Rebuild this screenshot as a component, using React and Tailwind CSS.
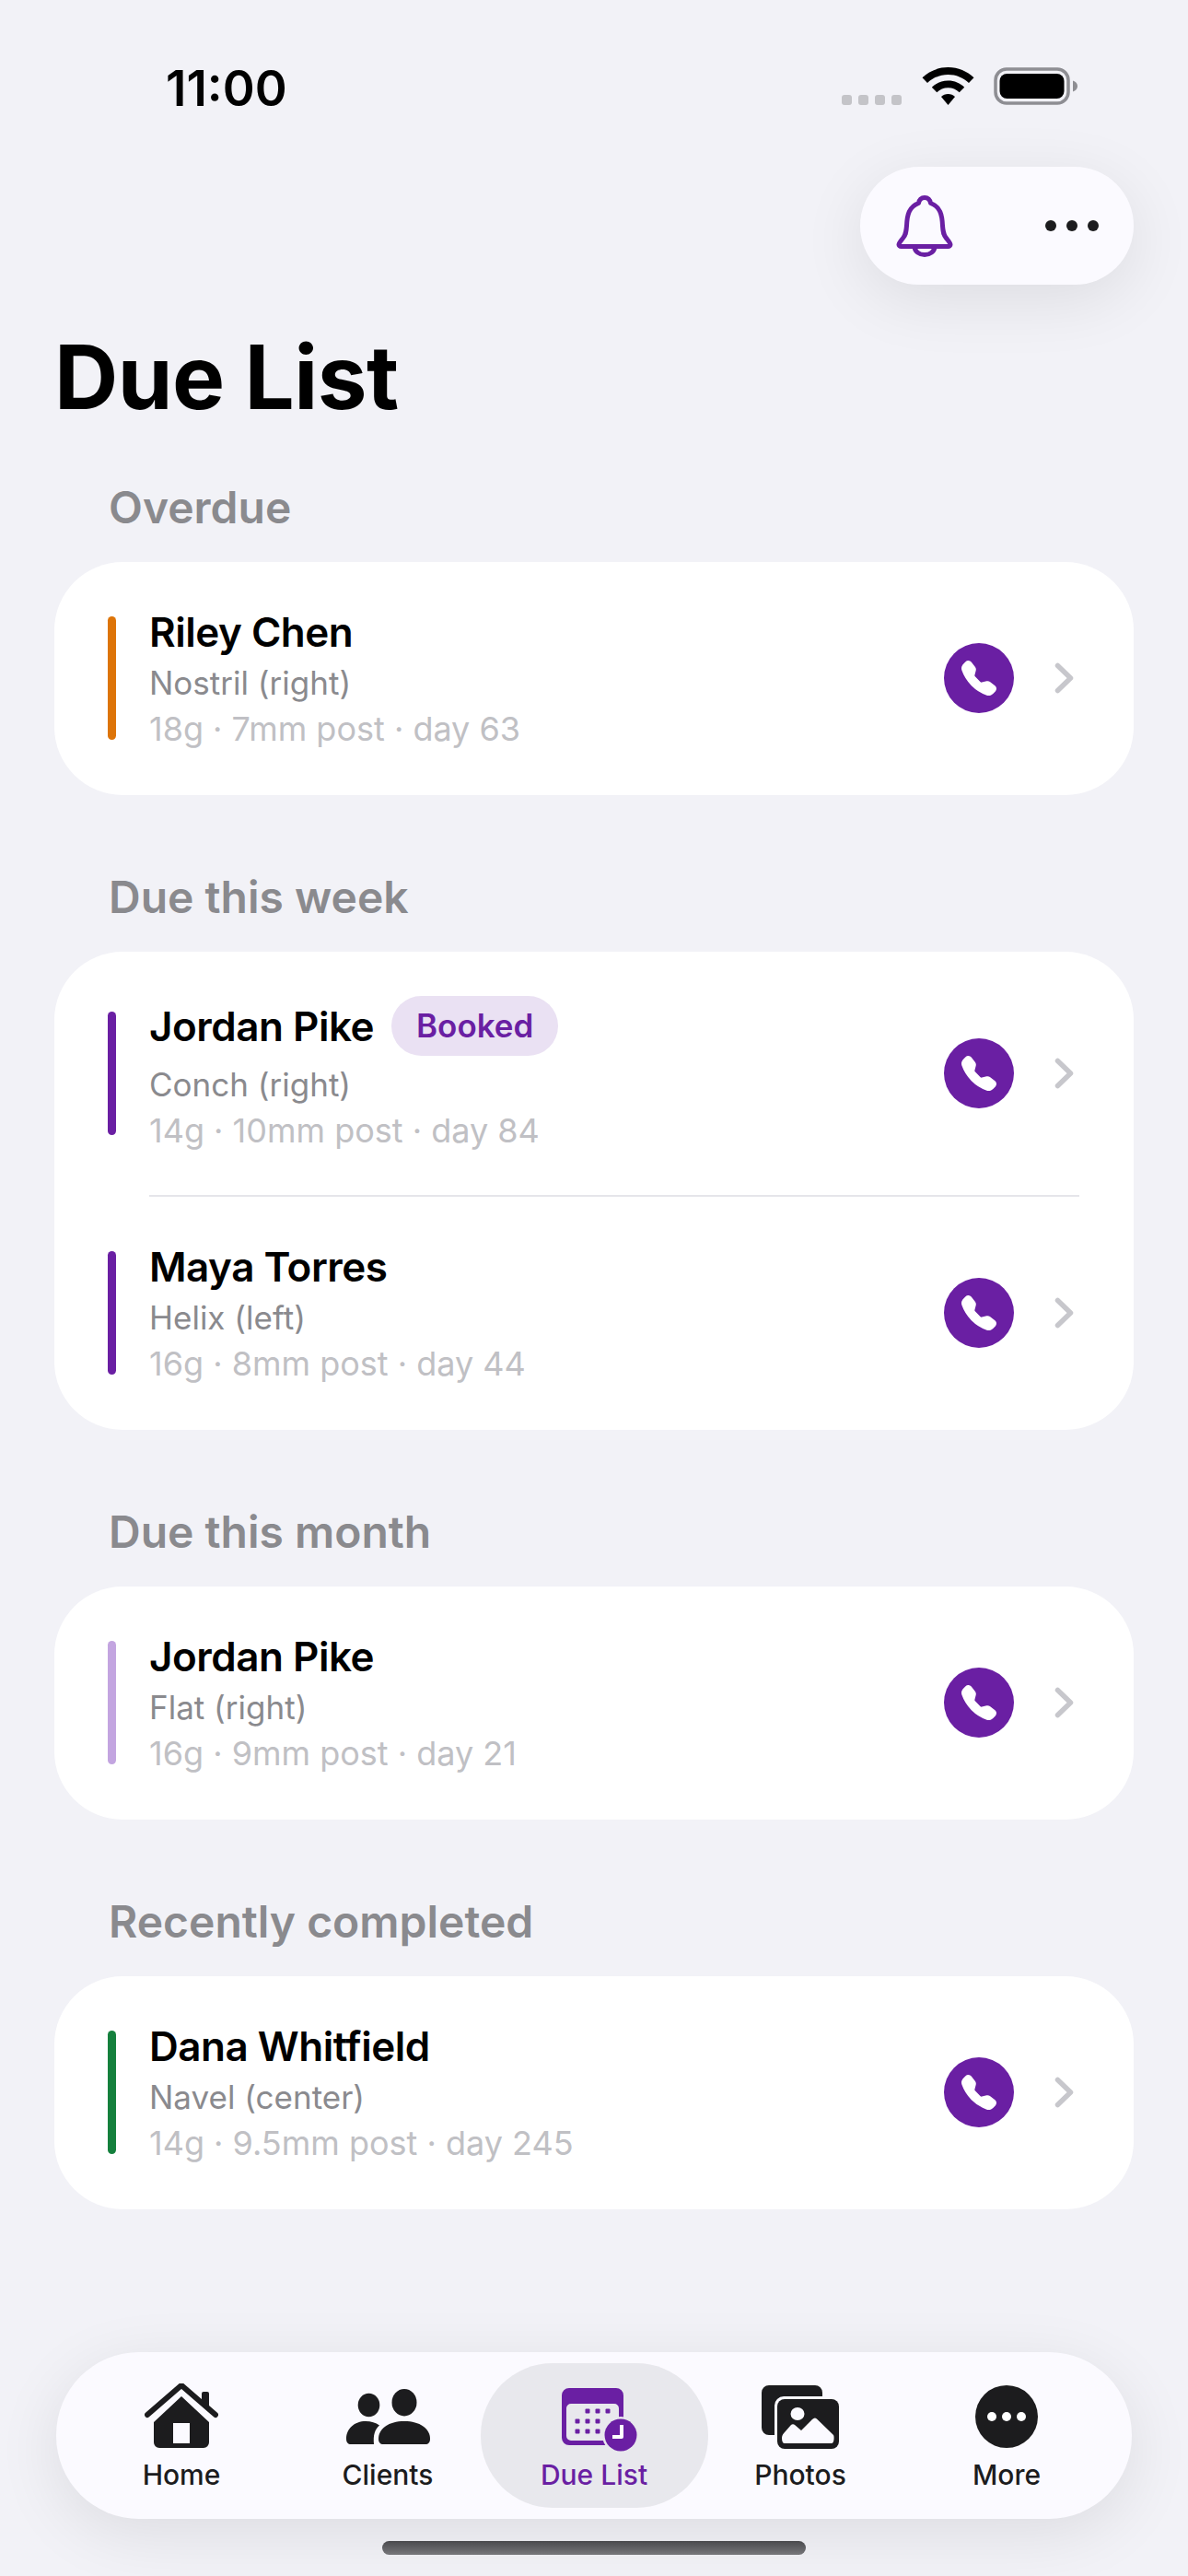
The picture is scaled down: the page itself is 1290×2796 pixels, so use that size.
import { BsTelephoneFill } from "react-icons/bs";

const SECTIONS = [
  {
    title: "Overdue",
    rows: [{ name: "Riley Chen", sub: "Nostril (right)", detail: "18g · 7mm post · day 63", bar: "bg-[#dd7408]" }],
  },
  {
    title: "Due this week",
    rows: [
      { name: "Jordan Pike", sub: "Conch (right)", detail: "14g · 10mm post · day 84", bar: "bg-[#6a1fa3]", booked: true },
      { name: "Maya Torres", sub: "Helix (left)", detail: "16g · 8mm post · day 44", bar: "bg-[#6a1fa3]" },
    ],
  },
  {
    title: "Due this month",
    rows: [{ name: "Jordan Pike", sub: "Flat (right)", detail: "16g · 9mm post · day 21", bar: "bg-[#c3a5e0]" }],
  },
  {
    title: "Recently completed",
    rows: [{ name: "Dana Whitfield", sub: "Navel (center)", detail: "14g · 9.5mm post · day 245", bar: "bg-[#15803d]" }],
  },
];

function StatusBar() {
  return (
    <div className="h-[181px] flex items-start justify-between pl-[180px] pr-[119px]">
      <span className="mt-[64px] text-[53px] leading-[64px] font-semibold text-black">11:00</span>
      <div className="mt-[73px] flex items-start">
        <div className="mt-[30px] flex gap-[7px]">
          <span className="w-[11px] h-[11px] rounded-[3px] bg-[#c4c4c8]" />
          <span className="w-[11px] h-[11px] rounded-[3px] bg-[#c4c4c8]" />
          <span className="w-[11px] h-[11px] rounded-[3px] bg-[#c4c4c8]" />
          <span className="w-[11px] h-[11px] rounded-[3px] bg-[#c4c4c8]" />
        </div>
        <svg className="ml-[22px]" width="57" height="41" viewBox="0 0 57 41">
          <path d="M28.5 0C17.5 0 7.8 4.3 0.5 11.3L6 17C11.9 11.4 19.8 8 28.5 8S45.1 11.4 51 17L56.500 11.300C49.2 4.300 39.5 0 28.500 0Z" fill="#000" />
          <path d="M28.500 14.500C21.600 14.500 15.400 17.200 10.800 21.700L16.300 27.300C19.500 24.200 23.800 22.300 28.500 22.300S37.500 24.200 40.700 27.300L46.200 21.700C41.600 17.200 35.400 14.500 28.500 14.500Z" fill="#000" />
          <path d="M28.500 29C25.600 29 22.900 30.200 21 32L28.500 41L36 32C34.100 30.200 31.400 29 28.500 29Z" fill="#000" />
        </svg>
        <svg className="ml-[21px]" width="92" height="41" viewBox="0 0 92 41">
          <rect x="2" y="2" width="79" height="37" rx="12" fill="none" stroke="#8e8e93" strokeWidth="3.500" />
          <rect x="6.500" y="7" width="70" height="27" rx="8" fill="#000" />
          <path d="M86 14.500C89 15.500 91 17.500 91 20.500S89 25.500 86 26.500Z" fill="#8e8e93" />
        </svg>
      </div>
    </div>
  );
}

function BellIcon() {
  return (
    <svg width="62" height="67" viewBox="0 0 62 67" fill="none" stroke="#6a1fa3" strokeWidth="5" strokeLinejoin="round" strokeLinecap="round">
      <path d="M3 53.500C3 51.500 5 49.500 7.500 46.500C10.500 43 11 40 11.500 33C12 21 14 12.500 24.500 8.500C25 5 27.500 2.500 31 2.500S37 5 37.500 8.500C48 12.500 50 21 50.500 33C51 40 51.500 43 54.500 46.500C57 49.500 59 51.500 59 53.500C59 54.500 58 55.500 56.500 55.500H5.500C4 55.500 3 54.500 3 53.500Z" />
      <path d="M20 56C20.500 61 25 64.500 31 64.500S41.500 61 42 56" />
    </svg>
  );
}

function Row({ row }) {
  return (
    <div className={`flex items-center pl-[58px] pr-[65px] pt-[48px] ${row.booked ? "pb-[48px]" : "pb-[50px]"}`}>
      <div className={`w-[9px] h-[134px] rounded-full ${row.bar}`} />
      <div className="ml-[36px] flex-1 min-w-0">
        {row.booked ? (
          <div className="flex items-center gap-[19px] h-[65px] mb-[9px]">
            <span className="text-[44px] leading-[56px] font-semibold tracking-[-0.5px] text-black">{row.name}</span>
            <span className="h-[65px] px-[27px] rounded-full bg-[#eae1f3] flex items-center text-[35px] font-semibold text-[#6a1fa3]">
              Booked
            </span>
          </div>
        ) : (
          <div className="text-[44px] leading-[56px] mb-[5px] font-semibold tracking-[-0.5px] text-black">{row.name}</div>
        )}
        <div className="text-[35px] leading-[44px] text-[#8a8a8e]">{row.sub}</div>
        <div className="mt-[6px] text-[36px] leading-[44px] text-[#c0c0c4]">{row.detail}</div>
      </div>
      <div className="w-[76px] h-[76px] rounded-full bg-[#6a1fa3] flex items-center justify-center text-white">
        <BsTelephoneFill size={38} />
      </div>
      <svg className="ml-[44px]" width="21" height="34" viewBox="0 0 21 34" fill="none" stroke="#c7c7cc" strokeWidth="5.500" strokeLinecap="round" strokeLinejoin="round">
        <path d="M3.500 3.500L17.500 17L3.500 30.500" />
      </svg>
    </div>
  );
}

function Section({ section }) {
  return (
    <div className="mb-[82px]">
      <div className="pl-[59px] text-[48px] leading-[58px] mb-[30px] font-semibold text-[#8a8a8e]">{section.title}</div>
      <div className="bg-white rounded-[74px]">
        {section.rows.map((row, i) => (
          <div key={row.name + row.sub}>
            {i > 0 && <div className="h-[2px] ml-[103px] mr-[59px] bg-[#e5e5ea]" />}
            <Row row={row} />
          </div>
        ))}
      </div>
    </div>
  );
}

function HomeIcon() {
  return (
    <svg width="80" height="72" viewBox="0 0 80 72">
      <path fillRule="evenodd" d="M40 14L70 42V64a6 6 0 0 1-6 6H16a6 6 0 0 1-6-6V42ZM31 43V65H49V43Z" fill="#1c1c1e" />
      <path d="M3 34L40 2L77 34" fill="none" stroke="#1c1c1e" strokeWidth="6" strokeLinecap="round" strokeLinejoin="round" />
      <path d="M62 11a2 2 0 0 1 2-2h4a2 2 0 0 1 2 2V27L62 20Z" fill="#1c1c1e" />
    </svg>
  );
}

function ClientsIcon() {
  return (
    <svg width="91" height="60" viewBox="0 0 91 60" fill="#1c1c1e">
      <ellipse cx="24.500" cy="17.500" rx="11.800" ry="12.800" />
      <ellipse cx="63" cy="14.700" rx="13.500" ry="14.700" />
      <path d="M0 54C0 43 9 35 21 35C27 35 32 36.500 36 39.500C31 44 29 50 30 60H5C2 60 0 58 0 54Z" />
      <path d="M35 54C35 43 46 35 63 35S91 43 91 54C91 58 89 60 86 60H40C37 60 35 58 35 54Z" />
    </svg>
  );
}

function CalendarIcon() {
  return (
    <svg width="98" height="78" viewBox="-14 -8 98 78">
      <path fillRule="evenodd" d="M8 0H59a8 8 0 0 1 8 8V54a8 8 0 0 1-8 8H8a8 8 0 0 1-8-8V8a8 8 0 0 1 8-8ZM10 17a5 5 0 0 0-5 5V52a5 5 0 0 0 5 5H57a5 5 0 0 0 5-5V22a5 5 0 0 0-5-5Z" fill="#6a1fa3" />
      <g fill="#6a1fa3">
        <rect x="25.500" y="22.500" width="5" height="5" rx="1" />
        <rect x="36.500" y="22.500" width="5" height="5" rx="1" />
        <rect x="47.500" y="22.500" width="5" height="5" rx="1" />
        <rect x="14.500" y="33.500" width="5" height="5" rx="1" />
        <rect x="25.500" y="33.500" width="5" height="5" rx="1" />
        <rect x="36.500" y="33.500" width="5" height="5" rx="1" />
        <rect x="14.500" y="44.500" width="5" height="5" rx="1" />
        <rect x="25.500" y="44.500" width="5" height="5" rx="1" />
        <rect x="36.500" y="44.500" width="5" height="5" rx="1" />
      </g>
      <circle cx="64" cy="51" r="20" fill="#e8e8ed" />
      <circle cx="64" cy="51" r="17.500" fill="#6a1fa3" />
      <path d="M65 40V53H55" fill="none" stroke="#ffffff" strokeWidth="4" strokeLinejoin="round" />
    </svg>
  );
}

function PhotosIcon() {
  return (
    <svg width="84" height="69" viewBox="0 0 84 69">
      <path d="M8 0H58a8 8 0 0 1 8 8V12H24a10 10 0 0 0-10 10V54H8a8 8 0 0 1-8-8V8a8 8 0 0 1 8-8Z" fill="#1c1c1e" />
      <rect x="17" y="15" width="67" height="54" rx="8" fill="#1c1c1e" />
      <ellipse cx="39" cy="31" rx="7.500" ry="7" fill="#fbfaff" />
      <path d="M22 57C22 54 24 52 25 51L32 43C33 42 35 42 36 43L43 49L55 37C57 35 59 35 60.500 37L78 54C79 55 79 63 76 63H25C23 63 22 61 22 57Z" fill="#fbfaff" />
    </svg>
  );
}

function MoreIcon() {
  return (
    <svg width="68" height="68" viewBox="0 0 68 68">
      <circle cx="34" cy="34" r="34" fill="#1c1c1e" />
      <circle cx="18" cy="34" r="5" fill="#fff" />
      <circle cx="34" cy="34" r="5" fill="#fff" />
      <circle cx="50" cy="34" r="5" fill="#fff" />
    </svg>
  );
}

const NAV = [
  { label: "Home", Icon: HomeIcon },
  { label: "Clients", Icon: ClientsIcon },
  { label: "Due List", Icon: CalendarIcon, active: true },
  { label: "Photos", Icon: PhotosIcon },
  { label: "More", Icon: MoreIcon },
];

function BottomNav() {
  return (
    <div className="mx-[61px] h-[181px] rounded-[90px] bg-[#fbfaff] px-[24px] flex items-center shadow-[0_16px_70px_rgba(0,0,0,0.09)]">
      {NAV.map(({ label, Icon, active }) => (
        <div
          key={label}
          className={
            active
              ? "w-[247px] -mx-[11.5px] h-[157px] rounded-[78px] bg-[#e8e8ed] flex flex-col items-center"
              : "w-[224px] h-[157px] flex flex-col items-center"
          }
        >
          <div className="h-[101px] flex items-center justify-center pt-[15px]">
            <Icon />
          </div>
          <span className={`text-[30px] leading-[40px] font-medium ${active ? "text-[#6a1fa3]" : "text-[#1c1c1e]"}`}>{label}</span>
        </div>
      ))}
    </div>
  );
}

export default function App() {
  return (
    <div className="w-[1290px] h-[2796px] bg-[#f2f2f7] flex flex-col overflow-hidden font-['Inter',sans-serif]">
      <StatusBar />
      <div className="flex justify-end pr-[59px]">
        <div className="w-[297px] h-[128px] rounded-full bg-[#fbfaff] flex items-center justify-between pl-[39px] pr-[38px] shadow-[0_16px_70px_rgba(0,0,0,0.09)]">
          <BellIcon />
          <div className="flex gap-[11px]">
            <span className="w-[12px] h-[12px] rounded-full bg-[#1c1c1e]" />
            <span className="w-[12px] h-[12px] rounded-full bg-[#1c1c1e]" />
            <span className="w-[12px] h-[12px] rounded-full bg-[#1c1c1e]" />
          </div>
        </div>
      </div>
      <h1 className="mt-[42px] mb-[55px] pl-[59px] text-[96px] leading-[116px] font-bold tracking-[-0.6px] text-black">Due List</h1>
      <div className="px-[59px]">
        {SECTIONS.map((section) => (
          <Section key={section.title} section={section} />
        ))}
      </div>
      <div className="mt-auto">
        <BottomNav />
        <div className="mt-[24px] mb-[23px] mx-auto w-[460px] h-[15px] rounded-full bg-gradient-to-b from-[#4a4a4e] to-[#77777b]" />
      </div>
    </div>
  );
}
